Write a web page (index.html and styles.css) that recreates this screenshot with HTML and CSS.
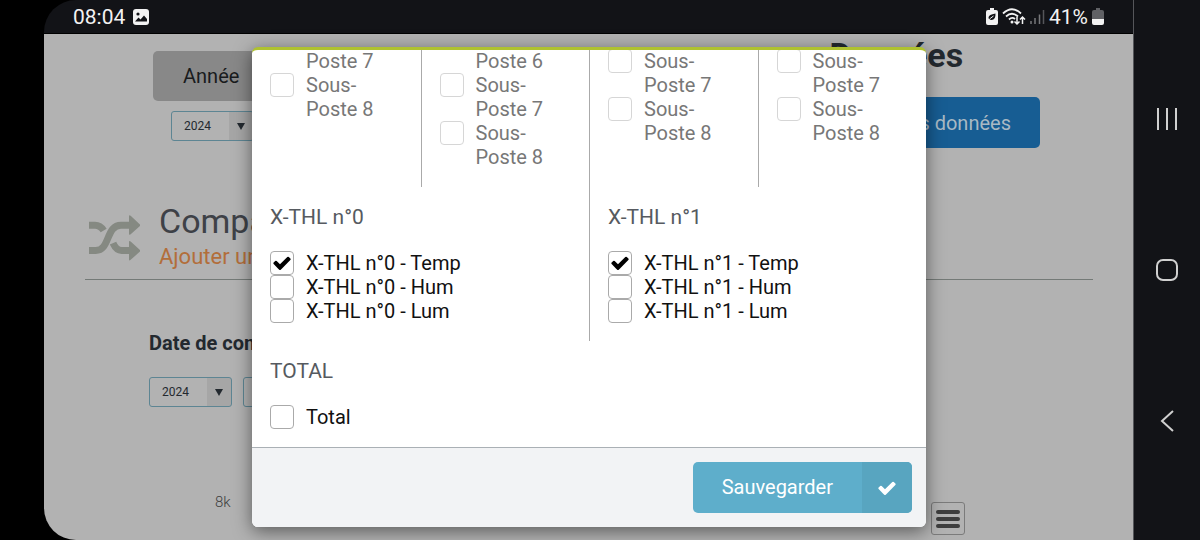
FILE: index.html
```html
<!DOCTYPE html>
<html lang="fr">
<head>
  <meta charset="UTF-8" />
  <meta name="viewport" content="width=device-width, initial-scale=1.0"/>
  <title>Comparaison des données</title>
  <link rel="stylesheet" href="styles.css">
</head>
<body>

<svg class="sprite" aria-hidden="true">
  <symbol id="tick" viewBox="0 0 1792 1792">
    <path d="M1671 566q0 40-28 68l-724 724-136 136q-28 28-68 28t-68-28l-136-136-362-362q-28-28-28-68t28-68l136-136q28-28 68-28t68 28l294 295 656-657q28-28 68-28t68 28l136 136q28 28 28 68z"/>
  </symbol>
</svg>

<div class="screen">

  <header class="status-bar">
    <span class="status-time">08:04</span>
    <svg width="16" height="16" viewBox="0 0 16 16">
      <rect width="16" height="16" rx="3" fill="#f2f2f2"/>
      <circle cx="5" cy="5" r="1.6" fill="#121317"/>
      <path d="M2 12.5 5.5 8.5 7.5 10.5 11 6.5 14 10v2.5z" fill="#121317"/>
    </svg>
    <div class="status-icons">
      <svg width="12" height="17" viewBox="0 0 12 17">
        <path d="M4 0h4v2h2q2 0 2 2v11q0 2-2 2H2q-2 0-2-2V4q0-2 2-2h2z" fill="#f2f2f2"/>
        <path d="M9.500 5.500Q9.800 12 5.500 12 2.500 12 2.500 9.500 2.500 6.500 9.500 5.500z" fill="#121317"/>
        <path d="M1.500 13.500Q4 10 7.500 8" fill="none" stroke="#f2f2f2"/>
      </svg>
      <svg width="24" height="18" viewBox="0 0 24 18">
        <g fill="none" stroke="#f2f2f2" stroke-width="1.800">
          <path d="M1 5.500Q10-3 19 5.500"/>
          <path d="M4 8.500Q10 3 16 8.500"/>
          <path d="M7 11.500Q10 8.500 13 11"/>
        </g>
        <circle cx="10" cy="14" r="1.500" fill="#f2f2f2"/>
        <path d="M15 9v7M12.500 13.500 15 16l2.500-2.500M20.500 16V9M18 11.500 20.500 9 23 11.500" fill="none" stroke="#f2f2f2" stroke-width="1.500"/>
      </svg>
      <svg width="15" height="16" viewBox="0 0 15 16">
        <path d="M1 12v3M5 9v6M9.500 5.500V15" stroke="#77787b" stroke-width="1.500"/>
        <path d="M13.500 1v14" stroke="#55565a" stroke-width="1.500"/>
      </svg>
      <span class="status-battery">41%</span>
      <svg width="12" height="17" viewBox="0 0 12 17">
        <path d="M4 0h4v2h2q2 0 2 2v7H0V4q0-2 2-2h2z" fill="#606165"/>
        <path d="M0 11h12v4q0 2-2 2H2q-2 0-2-2z" fill="#f2f2f2"/>
      </svg>
    </div>
  </header>

  <main class="page">

    <section class="top">
      <div class="period">
        <button type="button" class="btn-period">Année</button>
        <div class="select">
          <select aria-label="Année affichée"><option>2024</option></select>
        </div>
      </div>
      <div class="export">
        <h1>Données</h1>
        <button type="button" class="btn-export">Télécharger mes données</button>
      </div>
    </section>

    <section class="compare">
      <div class="compare-header">
        <svg class="shuffle" viewBox="0 0 153 137">
          <g fill="none" stroke="#858982" stroke-width="21">
            <path d="M0 106H20C64 106 50 30 96 30H122"/>
            <path d="M0 30H18Q34 30 44 46"/>
            <path d="M72 84Q82 106 98 106H122"/>
          </g>
          <path d="M120 3Q120-2 125 2L152 27Q155 30 152 33L125 57Q120 61 120 56zM120 80Q120 75 125 79L152 104Q155 107 152 110L125 134Q120 138 120 133z" fill="#858982"/>
        </svg>
        <div>
          <h2>Comparaison</h2>
          <a href="#">Ajouter une comparaison</a>
        </div>
      </div>

      <div class="compare-dates">
        <h3>Date de comparaison</h3>
        <div class="date-fields">
          <div class="select">
            <select aria-label="Année de comparaison"><option>2024</option></select>
          </div>
          <div class="select">
            <select aria-label="Mois de comparaison"><option>01</option></select>
          </div>
        </div>
      </div>

      <div class="chart">
        <span>8k</span>
        <button type="button" class="chart-menu" aria-label="Menu du graphique">
          <i></i><i></i><i></i>
        </button>
      </div>
    </section>

    <div class="overlay">
      <form class="modal" id="channels-form">
        <div class="modal-body">

          <div class="row row-4">
            <div class="cell">
              <label class="option disabled"><input type="checkbox" disabled /> Poste 6</label>
              <label class="option disabled"><input type="checkbox" disabled /> Sous-Poste 7</label>
              <label class="option disabled"><input type="checkbox" disabled /> Sous-Poste 8</label>
            </div>
            <div class="cell">
              <label class="option disabled"><input type="checkbox" disabled /> Poste 5</label>
              <label class="option disabled"><input type="checkbox" disabled /> Sous-Poste 6</label>
              <label class="option disabled"><input type="checkbox" disabled /> Sous-Poste 7</label>
              <label class="option disabled"><input type="checkbox" disabled /> Sous-Poste 8</label>
            </div>
            <div class="cell">
              <label class="option disabled"><input type="checkbox" disabled /> Sous-Poste 6</label>
              <label class="option disabled"><input type="checkbox" disabled /> Sous-Poste 7</label>
              <label class="option disabled"><input type="checkbox" disabled /> Sous-Poste 8</label>
            </div>
            <div class="cell">
              <label class="option disabled"><input type="checkbox" disabled /> Sous-Poste 6</label>
              <label class="option disabled"><input type="checkbox" disabled /> Sous-Poste 7</label>
              <label class="option disabled"><input type="checkbox" disabled /> Sous-Poste 8</label>
            </div>
          </div>

          <div class="row row-2">
            <div class="cell">
              <h4>X-THL n°0</h4>
              <label class="option"><input type="checkbox" name="thl0_temp" checked /><svg class="tick"><use href="#tick"/></svg> X-THL n°0 - Temp</label>
              <label class="option"><input type="checkbox" name="thl0_hum" /> X-THL n°0 - Hum</label>
              <label class="option"><input type="checkbox" name="thl0_lum" /> X-THL n°0 - Lum</label>
            </div>
            <div class="cell">
              <h4>X-THL n°1</h4>
              <label class="option"><input type="checkbox" name="thl1_temp" checked /><svg class="tick"><use href="#tick"/></svg> X-THL n°1 - Temp</label>
              <label class="option"><input type="checkbox" name="thl1_hum" /> X-THL n°1 - Hum</label>
              <label class="option"><input type="checkbox" name="thl1_lum" /> X-THL n°1 - Lum</label>
            </div>
          </div>

          <div class="row">
            <div class="cell">
              <h4>TOTAL</h4>
              <label class="option"><input type="checkbox" name="total" /> Total</label>
            </div>
          </div>

        </div>
        <div class="modal-footer">
          <button type="submit" class="btn-save">
            <span>Sauvegarder</span>
            <span class="btn-icon"><svg><use href="#tick"/></svg></span>
          </button>
        </div>
      </form>
    </div>

  </main>
</div>

<nav class="nav-bar">
  <button type="button" aria-label="Applications récentes">
    <svg width="22" height="22" viewBox="0 0 22 22"><path d="M2 0v22M11 0v22M20 0v22"/></svg>
  </button>
  <button type="button" aria-label="Accueil">
    <svg width="22" height="22" viewBox="0 0 22 22"><rect x="1" y="1" width="20" height="20" rx="6"/></svg>
  </button>
  <button type="button" aria-label="Retour">
    <svg width="22" height="22" viewBox="0 0 22 22"><path d="M17 1 6 11 17 21"/></svg>
  </button>
</nav>

</body>
</html>
```
FILE: styles.css
```css
* { box-sizing: border-box; }

body {
  margin: 0;
  min-height: 100vh;
  padding-left: 44px;
  display: flex;
  background: #000;
  color: #23292f;
  font-family: Roboto, "Liberation Sans", sans-serif;
  font-size: 20px;
  line-height: 24px;
}

h1, h2, h3, h4 { margin: 0; }
button { border: 0; padding: 0; font: inherit; cursor: pointer; }
svg { display: block; }
.sprite { position: absolute; width: 0; height: 0; }

.screen {
  flex: 1;
  min-width: 0;
  display: flex;
  flex-direction: column;
  border-radius: 32px 0 0 32px;
  overflow: hidden;
}

/* Android status bar */
.status-bar {
  height: 34px;
  padding: 0 29px 0 29px;
  display: flex;
  align-items: center;
  gap: 8px;
  background: #121317;
  border-bottom: 1px solid #000;
  color: #f2f2f2;
  font-size: 21px;
}
.status-icons {
  margin-left: auto;
  display: flex;
  align-items: center;
  gap: 4px;
}

/* Android navigation bar */
.nav-bar {
  width: 67px;
  padding: 98px 0;
  display: flex;
  flex-direction: column;
  justify-content: space-between;
  align-items: center;
  background: #121317;
  border-left: 1px solid #55565a;
}
.nav-bar button { padding: 10px; background: none; }
.nav-bar svg { fill: none; stroke: #d0d0d0; stroke-width: 2; }

/* Page behind the modal */
.page {
  flex: 1;
  position: relative;
  background: #b2b2b2;
}

.top {
  display: flex;
  justify-content: space-between;
  padding: 1px 93px 0 109px;
}
.period { margin-top: 16px; }
.btn-period {
  display: block;
  height: 50px;
  padding: 0 30px;
  margin-bottom: 10px;
  width: 160px;
  text-align: left;
  border-radius: 5px;
  background: #888;
  color: #191b1d;
}
.period .select { margin-left: 18px; }

.export { text-align: center; }
.export h1 {
  margin-bottom: 22px;
  font-size: 34px;
  line-height: 40px;
}
.btn-export {
  height: 51px;
  padding: 0 29px;
  border-radius: 5px;
  background: #175d93;
  color: #a9b9c4;
}

.select { position: relative; width: 83px; height: 30px; }
.select select {
  width: 100%;
  height: 100%;
  padding: 0 12px;
  appearance: none;
  border: 1px solid #5d8593;
  border-radius: 3px;
  background: linear-gradient(to left, #a6a6a6 24px, transparent 24px);
  color: #23292f;
  font: 12px Roboto, "Liberation Sans", sans-serif;
}
.select::after {
  content: "";
  position: absolute;
  right: 9px;
  top: 12px;
  border: solid transparent;
  border-width: 7px 4px 0;
  border-top-color: #23292f;
  pointer-events: none;
}

.compare { margin-top: 51px; }
.compare-header {
  margin: 0 40px 0 41px;
  padding: 0 0 8px 4px;
  display: flex;
  align-items: flex-end;
  gap: 19px;
  border-bottom: 1px solid #747a77;
}
.shuffle { width: 51px; height: 46px; margin-bottom: 10px; }
.compare-header h2 {
  color: #3e4147;
  font-size: 34px;
  font-weight: 400;
  line-height: 44px;
}
.compare-header a {
  display: block;
  color: #b26e3a;
  font-size: 22px;
  line-height: 28px;
  text-decoration: none;
}

.compare-dates { margin: 49px 105px 0; }
.compare-dates h3 {
  margin-bottom: 20px;
  font-size: 20px;
  line-height: 28px;
}
.date-fields { display: flex; gap: 11px; }

.chart {
  margin: 88px 168px 0 171px;
  display: flex;
  justify-content: space-between;
  color: #3e3e3e;
  font-size: 15px;
  font-weight: 300;
  line-height: 14px;
}
.chart-menu {
  width: 34px;
  height: 33px;
  margin-top: 7px;
  padding: 0 4px;
  display: flex;
  flex-direction: column;
  justify-content: center;
  gap: 3px;
  border: 1px solid #7b7b7b;
  border-radius: 3px;
  background: none;
}
.chart-menu i { height: 4px; border-radius: 2px; background: #3e3e3e; }

/* Modal */
.overlay {
  position: absolute;
  inset: 0;
  padding: 13px 207px 13px 208px;
  display: flex;
}
.modal {
  flex: 1;
  min-width: 0;
  display: flex;
  flex-direction: column;
  border-top: 3px solid #afc22f;
  border-radius: 6px;
  background: #fff;
  box-shadow: 0 4px 18px rgba(0, 0, 0, .5);
  overflow: hidden;
}
.modal-body {
  flex: 1 1 0;
  min-height: 0;
  display: flex;
  flex-direction: column;
  justify-content: flex-end;
  overflow: hidden;
}
.row { display: grid; flex-shrink: 0; }
.row-4 { grid-template-columns: repeat(4, 1fr); }
.row-2 { grid-template-columns: repeat(2, 1fr); }
.cell { padding: 18px; }
.cell + .cell { border-left: 1px solid #aaa; }
.cell h4 {
  margin-bottom: 22px;
  color: #565a60;
  font-size: 21px;
  font-weight: 400;
}

.option {
  position: relative;
  display: grid;
  grid-template-columns: 24px 1fr;
  column-gap: 12px;
  color: #111;
}
.option input {
  width: 24px;
  height: 24px;
  margin: 0;
  appearance: none;
  border: 1px solid #aaa;
  border-radius: 4px;
  background: #fff;
}
.option .tick {
  position: absolute;
  left: 2px;
  top: 2px;
  width: 20px;
  height: 20px;
  pointer-events: none;
}
.option input:not(:checked) + .tick { display: none; }
.option.disabled { color: #777; }
.option.disabled input { border-color: #d6d6d6; }

.modal-footer {
  padding: 14px;
  display: flex;
  justify-content: flex-end;
  border-top: 1px solid #aab0b5;
  background: #f2f3f5;
}
.btn-save {
  height: 51px;
  display: flex;
  align-items: stretch;
  border-radius: 5px;
  background: #5eaecb;
  color: #fff;
  line-height: 51px;
  overflow: hidden;
}
.btn-save span { padding: 0 29px; }
.btn-save .btn-icon {
  padding: 0 15px;
  display: flex;
  align-items: center;
  background: #58a5c0;
}
.btn-icon svg { width: 20px; height: 20px; fill: #fff; }
```
